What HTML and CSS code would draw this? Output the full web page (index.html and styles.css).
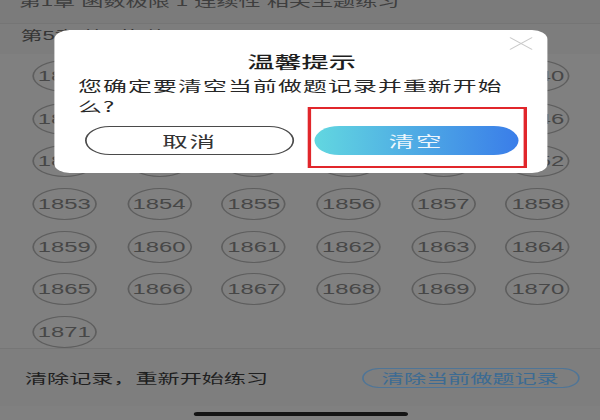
FILE: index.html
```html
<!DOCTYPE html>
<html lang="zh-CN">
<head>
  <meta charset="UTF-8" />
  <meta name="viewport" content="width=device-width, initial-scale=1.0" />
  <title>清除记录</title>
  <link rel="stylesheet" href="styles.css">
</head>
<body>
  <div class="screen">
    <div class="topbar"><span>第1章 函数极限 1 连续性 相关主题练习</span></div>
    <div class="chapter">第5章 第2节 练习题</div>
    <div class="grid">
      <span class="num">1835</span><span class="num">1836</span><span class="num">1837</span><span class="num">1838</span><span class="num">1839</span><span class="num">1840</span>
      <span class="num">1841</span><span class="num">1842</span><span class="num">1843</span><span class="num">1844</span><span class="num">1845</span><span class="num">1846</span>
      <span class="num">1847</span><span class="num">1848</span><span class="num">1849</span><span class="num">1850</span><span class="num">1851</span><span class="num">1852</span>
      <span class="num">1853</span><span class="num">1854</span><span class="num">1855</span><span class="num">1856</span><span class="num">1857</span><span class="num">1858</span>
      <span class="num">1859</span><span class="num">1860</span><span class="num">1861</span><span class="num">1862</span><span class="num">1863</span><span class="num">1864</span>
      <span class="num">1865</span><span class="num">1866</span><span class="num">1867</span><span class="num">1868</span><span class="num">1869</span><span class="num">1870</span>
      <span class="num">1871</span>
    </div>
    <div class="footer">
      <div class="hint">清除记录，重新开始练习</div>
      <div class="clear-link">清除当前做题记录</div>
    </div>
    <div class="home"><div class="home-bar"></div></div>

    <div class="dialog">
      <svg class="close" width="15" height="13" viewBox="0 0 15 13">
        <path d="M1 0.5 L14 12.5 M14 0.5 L1 12.5" stroke="#c9c9c9" stroke-width="1" fill="none"/>
      </svg>
      <div class="title">温馨提示</div>
      <div class="message">您确定要清空当前做题记录并重新开始么?</div>
      <div class="actions">
        <div class="btn btn-cancel">取消</div>
        <div class="btn btn-ok">清空</div>
      </div>
      <div class="mark"></div>
    </div>
  </div>
</body>
</html>
```

FILE: styles.css
```css
body {
  margin: 0;
  padding: 0;
  background: #808080;
  overflow: hidden;
  font-family: "Liberation Sans", "Noto Sans CJK SC", sans-serif;
}
.screen {
  position: relative;
  width: 353px;
  height: 420px;
  transform: scaleX(1.7);
  transform-origin: 0 0;
  background: #808080;
}
.topbar {
  height: 24px;
  overflow: hidden;
  background: #7b7b7b;
  border-bottom: 1px solid #757575;
  box-sizing: border-box;
  padding-left: 11px;
  font-size: 13px;
  line-height: 12px;
  color: #3e3e3e;
}
.topbar span {
  display: block;
  margin-top: -4px;
}
.chapter {
  height: 30px;
  line-height: 24px;
  padding-left: 12px;
  font-size: 13px;
  color: #353535;
  background: #7d7d7d;
}
.grid {
  display: grid;
  grid-template-columns: repeat(6, 38px);
  grid-auto-rows: 32px;
  justify-content: space-between;
  row-gap: 10.7px;
  margin-top: 6px;
  padding: 0 17.6px 0 18.8px;
}
.num {
  border: 1px solid #5e5e5e;
  border-radius: 50%;
  display: flex;
  align-items: center;
  justify-content: center;
  font-size: 14px;
  color: #474747;
}
.footer {
  height: 58px;
  border-top: 1px solid #767676;
  box-sizing: border-box;
  display: flex;
  align-items: center;
  justify-content: space-between;
  padding: 0 12.4px 0 14.7px;
  background: #7e7e7e;
}
.hint {
  font-size: 13px;
  color: #1f1f1f;
}
.clear-link {
  width: 128px;
  height: 20px;
  box-sizing: border-box;
  border: 1px solid #4f7597;
  border-radius: 10px;
  display: flex;
  align-items: center;
  justify-content: center;
  font-size: 13px;
  color: #3c6b93;
}
.home {
  padding-top: 6px;
}
.home-bar {
  width: 126px;
  height: 4px;
  margin: 0 auto;
  border-radius: 2px;
  background: #141414;
}
.dialog {
  position: absolute;
  left: 32.4px;
  top: 30px;
  width: 290px;
  background: #fff;
  border-radius: 9px;
  padding-bottom: 18px;
  font-family: "Noto Sans CJK SC", sans-serif;
}
.close {
  position: absolute;
  left: 266.5px;
  top: 7px;
}
.title {
  padding-top: 20px;
  line-height: 23px;
  text-align: center;
  font-size: 16px;
  font-weight: 500;
  color: #1e1e1e;
}
.message {
  margin-top: 2px;
  padding: 0 16px 0 13.5px;
  font-size: 14px;
  line-height: 21px;
  letter-spacing: 0.7px;
  color: #262626;
}
.actions {
  display: flex;
  gap: 12px;
  margin-top: 9px;
  padding: 0 17.6px 0 18px;
}
.btn {
  flex: 1;
  height: 29px;
  box-sizing: border-box;
  border-radius: 15px;
  display: flex;
  align-items: center;
  justify-content: center;
  font-size: 15px;
  letter-spacing: 1px;
}
.btn-cancel {
  border: 1px solid #4a4a4a;
  color: #333;
}
.btn-ok {
  background: linear-gradient(90deg, #62d7e0, #3a7de9);
  color: rgba(255, 255, 255, 0.92);
}
.mark {
  position: absolute;
  left: 148.2px;
  top: 77px;
  width: 129.4px;
  height: 61px;
  box-sizing: border-box;
  border: 2px solid #e1262b;
}
```
